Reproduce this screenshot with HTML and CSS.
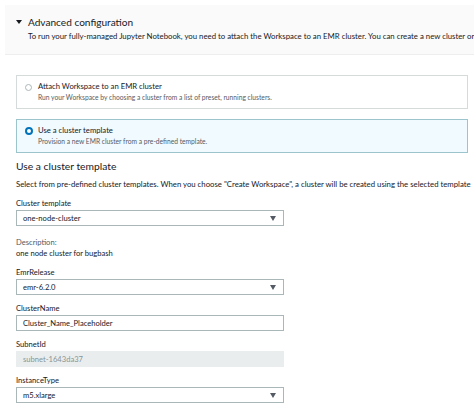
FILE: index.html
```html
<!DOCTYPE html>
<html>
<head>
<meta charset="utf-8">
<link rel="stylesheet" href="styles.css">
</head>
<body>
<div class="panel">
  <div class="panel-title"><span class="caret-down"></span>Advanced configuration</div>
  <div class="panel-desc">To run your fully-managed Jupyter Notebook, you need to attach the Workspace to an EMR cluster. You can create a new cluster or</div>
</div>
<div class="content">
  <div class="tile">
    <span class="radio"></span>
    <div class="tile-text">
      <div class="tile-title">Attach Workspace to an EMR cluster</div>
      <div class="tile-desc">Run your Workspace by choosing a cluster from a list of preset, running clusters.</div>
    </div>
  </div>
  <div class="tile tile-selected">
    <span class="radio radio-on"></span>
    <div class="tile-text">
      <div class="tile-title">Use a cluster template</div>
      <div class="tile-desc">Provision a new EMR cluster from a pre-defined template.</div>
    </div>
  </div>
  <h2 class="section-title">Use a cluster template</h2>
  <p class="section-desc">Select from pre-defined cluster templates. When you choose "Create Workspace", a cluster will be created using the selected template</p>
  <div class="field">
    <div class="label">Cluster template</div>
    <div class="control select">one-node-cluster<span class="tri"></span></div>
  </div>
  <div class="descr">
    <div class="descr-label">Description:</div>
    <div>one node cluster for bugbash</div>
  </div>
  <div class="field">
    <div class="label">EmrRelease</div>
    <div class="control select">emr-6.2.0<span class="tri"></span></div>
  </div>
  <div class="field">
    <div class="label">ClusterName</div>
    <div class="control input">Cluster_Name_Placeholder</div>
  </div>
  <div class="field">
    <div class="label">SubnetId</div>
    <div class="control disabled">subnet-1643da37</div>
  </div>
  <div class="field">
    <div class="label">InstanceType</div>
    <div class="control select">m5.xlarge<span class="tri"></span></div>
  </div>
</div>
</body>
</html>
```

FILE: styles.css
```css
html, body {
  margin: 0;
  padding: 0;
  background: #ffffff;
}
body {
  font-family: "Lato", "Open Sans", sans-serif;
  color: #16191f;
  width: 474px;
  overflow: hidden;
}
.panel {
  margin: 5px 0 0 5px;
  height: 50px;
  background: #fafafa;
  border-bottom: 1px solid #eeeeee;
  padding: 10px 0 0 11px;
  box-sizing: border-box;
  white-space: nowrap;
  overflow: hidden;
}
.panel-title {
  display: flex;
  align-items: center;
  font-size: 10.1px;
  line-height: 14px;
  color: #16191f;
}
.caret-down {
  width: 0;
  height: 0;
  border-left: 3px solid transparent;
  border-right: 3px solid transparent;
  border-top: 4px solid #16191f;
  margin-right: 6px;
}
.panel-desc {
  font-size: 7.8px;
  line-height: 12px;
  color: #16191f;
  margin-top: 1px;
  padding-left: 12px;
}
.content {
  padding: 20px 6px 0 16px;
}
.tile {
  display: flex;
  align-items: flex-start;
  height: 34px;
  border: 1px solid #d5dbdb;
  box-sizing: border-box;
  padding: 5px 0 0 8px;
  margin-bottom: 10px;
  background: #ffffff;
}
.tile-selected {
  background: #f1faff;
  border-color: #9cc4cc;
  margin-bottom: 5px;
}
.radio {
  width: 7px;
  height: 7px;
  border-radius: 50%;
  border: 1px solid #aab7b8;
  margin: 3px 6px 0 0;
  box-sizing: border-box;
  background: #fff;
  flex: none;
}
.radio-on {
  width: 8px;
  height: 8px;
  margin: 2px 5px 0 0;
  border: 2.5px solid #0073bb;
}
.tile-title {
  font-size: 7.7px;
  line-height: 11px;
}
.tile-desc {
  font-size: 6.7px;
  line-height: 11px;
  color: #545b64;
}
.section-title {
  margin: 0;
  font-size: 10.3px;
  line-height: 16px;
  font-weight: normal;
}
.section-desc {
  margin: 4px 0 0 0;
  font-size: 7.78px;
  line-height: 12px;
  white-space: nowrap;
}
.field {
  margin-top: 6.5px;
  width: 268px;
}
.label {
  font-size: 7.6px;
  line-height: 13.5px;
}
.control {
  height: 16px;
  box-sizing: border-box;
  border: 1px solid #aab7b8;
  font-size: 7.6px;
  line-height: 14px;
  padding: 0 6px;
  position: relative;
  background: #fff;
}
.disabled {
  background: #eaeded;
  border-color: #eaeded;
  color: #879596;
}
.tri {
  position: absolute;
  right: 7px;
  top: 5px;
  width: 0;
  height: 0;
  border-left: 3px solid transparent;
  border-right: 3px solid transparent;
  border-top: 5px solid #545b64;
}
.descr {
  margin-top: 11px;
  font-size: 7.6px;
  line-height: 11px;
}
.descr-label {
  color: #545b64;
}
```
